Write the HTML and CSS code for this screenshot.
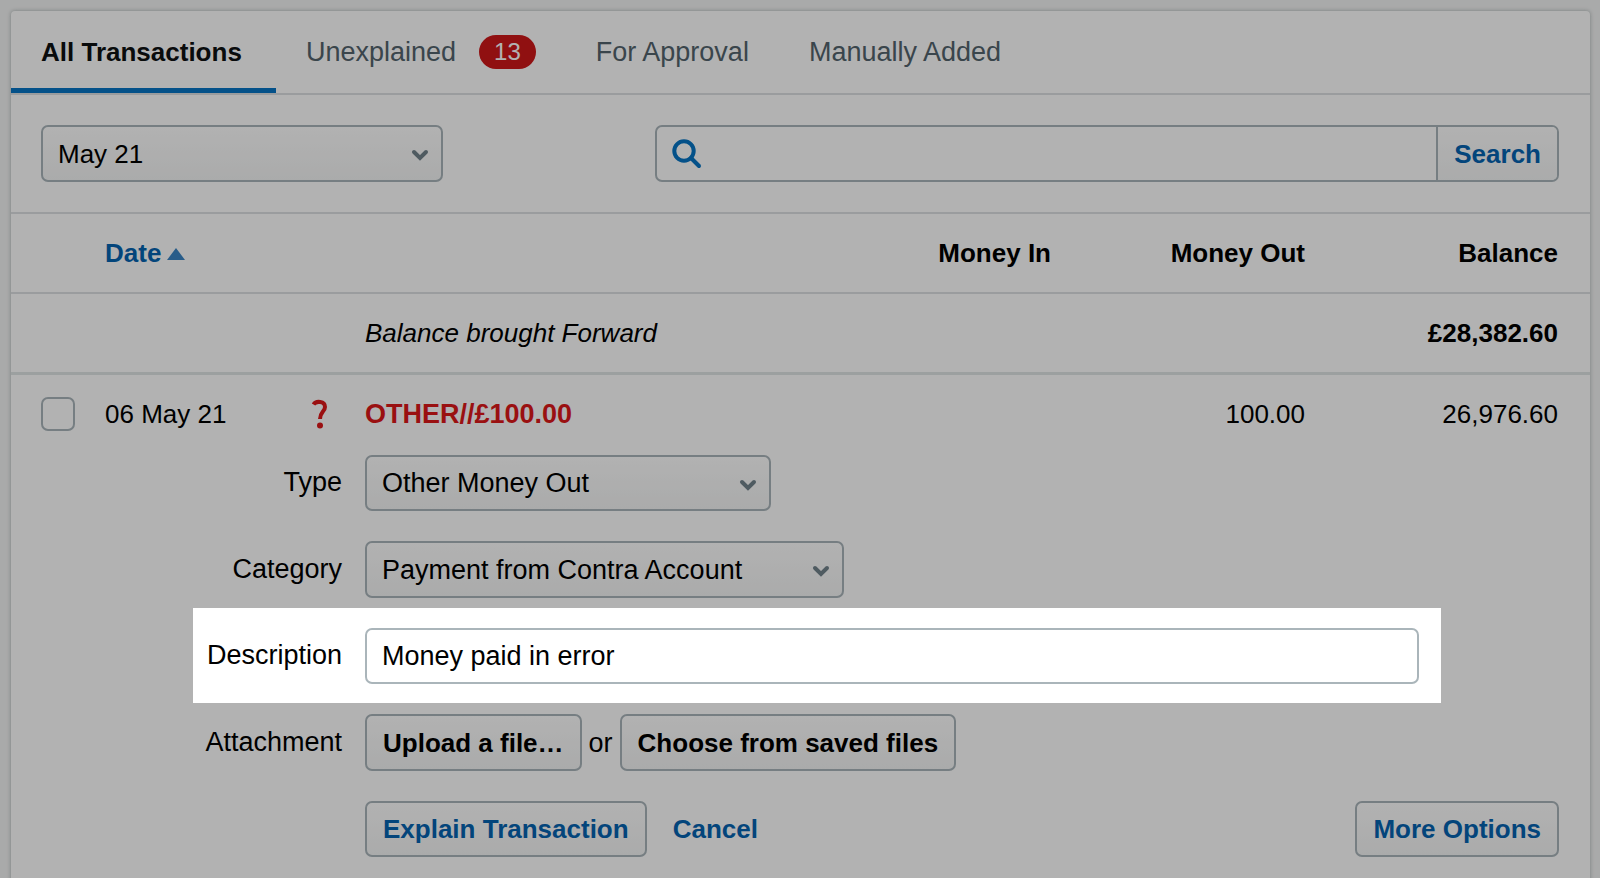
FILE: index.html
```html
<!DOCTYPE html>
<html lang="en">
<head>
  <meta charset="UTF-8">
  <meta name="viewport" content="width=device-width, initial-scale=1.0">
  <title>Bank Transactions</title>
  <link rel="stylesheet" href="styles.css">
</head>
<body>
  <main class="card">
    <nav class="tabs">
      <a class="tab active" href="#">All Transactions</a>
      <a class="tab" href="#">Unexplained <span class="badge">13</span></a>
      <a class="tab" href="#">For Approval</a>
      <a class="tab" href="#">Manually Added</a>
    </nav>

    <form class="filters">
      <div class="select month">
        <select aria-label="Month">
          <option>May 21</option>
        </select>
        <svg class="chevron" viewBox="0 0 18 12"><path d="M3 3l6 6 6-6"/></svg>
      </div>
      <div class="search">
        <svg class="search-icon" viewBox="0 0 30 30"><circle cx="12" cy="12" r="9.7"/><path d="M19 19l8 8"/></svg>
        <input type="search" aria-label="Search transactions">
        <button type="submit">Search</button>
      </div>
    </form>

    <table class="transactions">
      <colgroup>
        <col class="col-check">
        <col class="col-date">
        <col class="col-status">
        <col>
        <col class="col-in">
        <col class="col-out">
        <col class="col-balance">
      </colgroup>
      <thead>
        <tr>
          <td></td>
          <th class="date" colspan="2"><a href="#">Date<svg class="sort" viewBox="0 0 18 12"><path d="M9 0l9 12H0z"/></svg></a></th>
          <td></td>
          <th>Money In</th>
          <th>Money Out</th>
          <th>Balance</th>
        </tr>
      </thead>
      <tbody>
        <tr class="forward">
          <td colspan="3"></td>
          <td><em>Balance brought Forward</em></td>
          <td></td>
          <td></td>
          <td class="amount"><strong>£28,382.60</strong></td>
        </tr>
        <tr class="entry">
          <td class="check"><input type="checkbox" aria-label="Select transaction"></td>
          <td>06 May 21</td>
          <td><svg class="question" viewBox="0 0 30 30"><path d="M8.500 5.500C11 1.500 20 2 20 8C20 12.500 15 13 15 20"/><circle cx="15" cy="26.500" r="3"/></svg></td>
          <td class="name">OTHER//£100.00</td>
          <td></td>
          <td class="amount">100.00</td>
          <td class="amount">26,976.60</td>
        </tr>
        <tr class="explain">
          <td colspan="7">
            <form class="fields">
              <div class="field">
                <label for="type">Type</label>
                <div class="select type">
                  <select id="type">
                    <option>Other Money Out</option>
                  </select>
                  <svg class="chevron" viewBox="0 0 18 12"><path d="M3 3l6 6 6-6"/></svg>
                </div>
              </div>
              <div class="field">
                <label for="category">Category</label>
                <div class="select category">
                  <select id="category">
                    <option>Payment from Contra Account</option>
                  </select>
                  <svg class="chevron" viewBox="0 0 18 12"><path d="M3 3l6 6 6-6"/></svg>
                </div>
              </div>
              <div class="field spotlight">
                <label for="description">Description</label>
                <input type="text" id="description" value="Money paid in error">
              </div>
              <div class="field">
                <label for="upload">Attachment</label>
                <div class="attachment">
                  <button type="button" id="upload">Upload a file…</button>
                  <span>or</span>
                  <button type="button">Choose from saved files</button>
                </div>
              </div>
              <div class="actions">
                <button type="submit" class="blue">Explain Transaction</button>
                <a href="#">Cancel</a>
                <button type="button" class="blue more">More Options</button>
              </div>
            </form>
          </td>
        </tr>
      </tbody>
    </table>
  </main>
</body>
</html>
```

FILE: styles.css
```css
* {
  box-sizing: border-box;
}

body {
  margin: 0;
  padding: 11px 10px 0 11px;
  background-color: #f3f4f4;
  color: #000;
  font-family: "Liberation Sans", Arial, sans-serif;
  font-size: 26px;
  line-height: 30px;
}

a {
  color: #0563b1;
  font-weight: bold;
  text-decoration: none;
}

.card {
  background-color: #fff;
  border-radius: 4px 4px 0 0;
  box-shadow: 0 0 4px rgba(60, 80, 80, 0.4);
}

/* tabs */
.tabs {
  display: flex;
  height: 84px;
  border-bottom: 2px solid #dde0e2;
}

.tab {
  display: flex;
  align-items: center;
  gap: 23px;
  padding: 5px 30px 0;
  border-bottom: 5px solid transparent;
  color: #53646d;
  font-size: 27px;
  font-weight: normal;
}

.tab.active {
  min-width: 265px;
  border-bottom-color: #0675c4;
  color: #0d1012;
  font-size: 26px;
  font-weight: bold;
}

.badge {
  padding: 1px 15px;
  border-radius: 17px;
  background-color: #ce1719;
  color: #fff;
  font-size: 24px;
  line-height: 32px;
}

/* filters */
.filters {
  display: flex;
  justify-content: space-between;
  padding: 30px 31px 30px 30px;
  border-bottom: 2px solid #dde0e2;
}

.select {
  position: relative;
}

select,
button,
input[type="text"],
.search {
  height: 57px;
  border: 2px solid #aab5ba;
  border-radius: 7px;
  color: #000;
  font: inherit;
}

select,
button {
  background: linear-gradient(#fff, #f4f5f5);
}

select {
  width: 100%;
  padding: 0 48px 0 15px;
  appearance: none;
}

.chevron {
  position: absolute;
  top: 24px;
  right: 14px;
  width: 18px;
  height: 12px;
  fill: none;
  stroke: #72838c;
  stroke-width: 4;
  stroke-linecap: round;
  pointer-events: none;
}

.month {
  width: 402px;
}

.search {
  display: flex;
  align-items: center;
  width: 904px;
  overflow: hidden;
}

.search input {
  flex: 1;
  min-width: 0;
  padding: 0 16px;
  border: 0;
  background: none;
  font: inherit;
}

.search-icon {
  width: 30px;
  height: 30px;
  margin-left: 15px;
  fill: none;
  stroke: #0675c4;
  stroke-width: 4;
  stroke-linecap: round;
}

.search button {
  border-width: 0 0 0 2px;
  border-radius: 0;
  color: #0563b1;
}

button {
  padding: 0 16px;
  font-weight: bold;
}

/* transactions */
.transactions {
  width: 100%;
  table-layout: fixed;
  border-collapse: separate;
  border-spacing: 0;
}

.col-check { width: 94px; }
.col-date { width: 200px; }
.col-status { width: 60px; }
.col-in { width: 180px; }
.col-out { width: 254px; }
.col-balance { width: 285px; }

th,
td {
  height: 80px;
  padding: 0;
  text-align: left;
  white-space: nowrap;
}

thead th,
thead td {
  border-bottom: 2px solid #dde0e2;
}

th,
.amount {
  text-align: right;
}

th:last-child,
.amount:last-child {
  padding-right: 32px;
}

.date {
  text-align: left;
}

.sort {
  width: 18px;
  height: 12px;
  margin-left: 6px;
  vertical-align: 2px;
  fill: #3a85c4;
}

.forward td {
  height: 81px;
  border-bottom: 3px solid #e0e6e6;
}

.entry td {
  padding-bottom: 2px;
}

.check {
  padding-left: 30px;
}

input[type="checkbox"] {
  display: block;
  width: 34px;
  height: 34px;
  margin: 0;
  border: 2px solid #aab5ba;
  border-radius: 7px;
  background-color: #fff;
  appearance: none;
}

.question {
  display: block;
  width: 30px;
  height: 30px;
  fill: #dd1719;
}

.question path {
  fill: none;
  stroke: #dd1719;
  stroke-width: 4;
}

.name {
  color: #dd1719;
  font-size: 27px;
  font-weight: bold;
}

/* explanation form */
.fields {
  display: flex;
  flex-direction: column;
  gap: 30px;
  padding: 0 31px 30px 30px;
}

.field {
  display: grid;
  grid-template-columns: 301px 1fr;
  column-gap: 23px;
  align-items: center;
  font-size: 27px;
}

.field label {
  padding-bottom: 2px;
  text-align: right;
}

.field button {
  font-size: 26px;
}

#type,
.fields input,
.actions button {
  height: 56px;
}

.type {
  width: 406px;
}

.category {
  width: 479px;
}

.field input {
  width: 100%;
  padding: 0 15px;
  background-color: #fff;
}

/* everything outside the highlighted field is dimmed */
.spotlight {
  position: relative;
  z-index: 1;
  margin-right: 140px;
}

.spotlight::before {
  content: "";
  position: absolute;
  inset: -20px -22px -19px 152px;
  z-index: -1;
  background-color: #fff;
  box-shadow: 0 0 0 2000px rgba(0, 0, 0, 0.3);
}

.attachment {
  display: flex;
  align-items: center;
  gap: 7px;
}

.actions {
  display: flex;
  align-items: center;
  gap: 26px;
  padding-left: 324px;
}

.blue {
  color: #0563b1;
}

.more {
  margin-left: auto;
}
```
